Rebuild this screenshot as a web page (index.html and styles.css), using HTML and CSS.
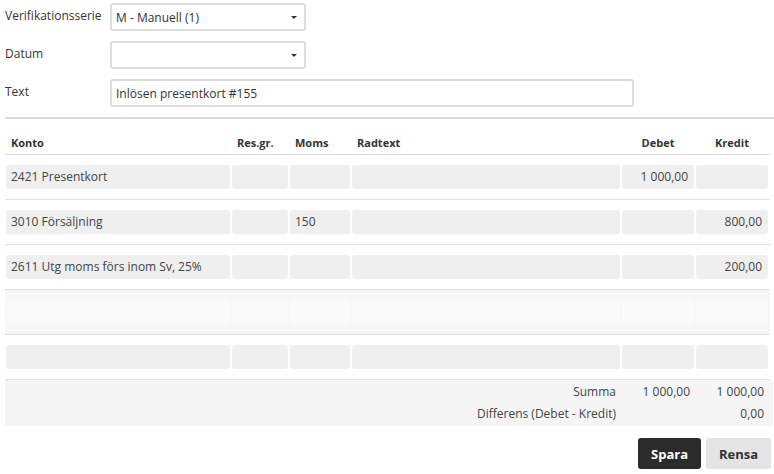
FILE: index.html
```html
<!DOCTYPE html>
<html>
<head>
<meta charset="utf-8">
<link rel="stylesheet" href="styles.css">
</head>
<body>
<div class="form">
  <div class="frow">
    <label class="flabel">Verifikationsserie</label>
    <div class="select"><span>M - Manuell (1)</span><i class="caret"></i></div>
  </div>
  <div class="frow">
    <label class="flabel">Datum</label>
    <div class="select"><span></span><i class="caret"></i></div>
  </div>
  <div class="frow">
    <label class="flabel">Text</label>
    <div class="input">Inlösen presentkort #155</div>
  </div>
</div>
<div class="rule"></div>
<div class="grid head">
  <div class="h">Konto</div>
  <div class="h">Res.gr.</div>
  <div class="h">Moms</div>
  <div class="h">Radtext</div>
  <div class="h c">Debet</div>
  <div class="h c">Kredit</div>
</div>
<div class="grid row">
  <div class="cell">2421 Presentkort</div>
  <div class="cell"></div>
  <div class="cell"></div>
  <div class="cell"></div>
  <div class="cell r">1 000,00</div>
  <div class="cell r"></div>
</div>
<div class="grid row">
  <div class="cell">3010 Försäljning</div>
  <div class="cell"></div>
  <div class="cell">150</div>
  <div class="cell"></div>
  <div class="cell r"></div>
  <div class="cell r">800,00</div>
</div>
<div class="grid row">
  <div class="cell">2611 Utg moms förs inom Sv, 25%</div>
  <div class="cell"></div>
  <div class="cell"></div>
  <div class="cell"></div>
  <div class="cell r"></div>
  <div class="cell r">200,00</div>
</div>
<div class="grid row new">
  <div class="cell"></div>
  <div class="cell"></div>
  <div class="cell"></div>
  <div class="cell"></div>
  <div class="cell"></div>
  <div class="cell"></div>
</div>
<div class="grid row">
  <div class="cell"></div>
  <div class="cell"></div>
  <div class="cell"></div>
  <div class="cell"></div>
  <div class="cell"></div>
  <div class="cell"></div>
</div>
<div class="foot">
  <div class="grid frow2">
    <div class="flab">Summa</div>
    <div class="fval">1 000,00</div>
    <div class="fval">1 000,00</div>
  </div>
  <div class="grid frow2">
    <div class="flab">Differens (Debet - Kredit)</div>
    <div class="fval"></div>
    <div class="fval">0,00</div>
  </div>
</div>
<div class="actions">
  <button class="btn primary">Spara</button>
  <button class="btn secondary">Rensa</button>
</div>
</body>
</html>
```
FILE: styles.css
```css
* { box-sizing: border-box; }
body {
  margin: 0;
  padding: 3px 4px 0 5px;
  font-family: "Open Sans", "Liberation Sans", sans-serif;
  font-size: 12px;
  color: #333;
  background: #fff;
}
.form { display: flex; flex-direction: column; gap: 10px; }
.frow { display: flex; align-items: flex-start; }
.flabel { width: 105px; padding-top: 5px; line-height: 16px; color: #333; }
.select, .input {
  height: 28px;
  border: 2px solid #dcdcdc;
  border-radius: 3px;
  display: flex;
  align-items: center;
  padding: 0 4px;
  color: #333;
  font-size: 12px;
}
.select { width: 196px; justify-content: space-between; padding-right: 7px; }
.input { width: 524px; }
.caret {
  width: 0; height: 0;
  border-left: 3px solid transparent;
  border-right: 3px solid transparent;
  border-top: 3px solid #333;
}
.rule { height: 2px; background: #dadada; margin-top: 10px; margin-right: -4px; }
.grid {
  display: grid;
  grid-template-columns: 226px 58px 62px 270px 74px 74px;
  width: 765px;
}
.head { height: 36px; border-bottom: 1px solid #dcdcdc; }
.h { font-weight: 700; font-size: 11px; color: #333; padding: 16px 0 0 6px; line-height: 15px; }
.h.c { text-align: center; padding-left: 0; }
.row { padding: 10px 0; border-bottom: 1px solid #e2e2e2; }
.cell {
  margin: 0 1px;
  height: 24px;
  background: #efefef;
  border-radius: 3px;
  padding: 0 5px;
  line-height: 24px;
  color: #444;
  white-space: nowrap;
}
.cell.r { text-align: right; padding-right: 6px; }
.row.new { background: #f7f7f7; }
.row.new .cell { background: #fafafa; }
.foot { background: #f5f5f5; margin-right: -3px; padding-top: 1px; height: 46px; }
.frow2 { height: 22px; line-height: 22px; color: #444; }
.flab { grid-column: 1 / 5; text-align: right; padding-right: 5px; }
.fval { text-align: right; padding-right: 5px; }
.actions { display: flex; justify-content: flex-end; gap: 5px; margin-top: 12px; margin-right: -1px; }
.btn {
  font-family: "Open Sans", "Liberation Sans", sans-serif;
  font-weight: 700;
  font-size: 13px;
  height: 31px;
  border: none;
  border-radius: 3px;
  padding: 0;
}
.primary { width: 63px; background: #2b2b2b; color: #fff; }
.secondary { width: 65px; background: #e4e4e4; color: #333; }
```
